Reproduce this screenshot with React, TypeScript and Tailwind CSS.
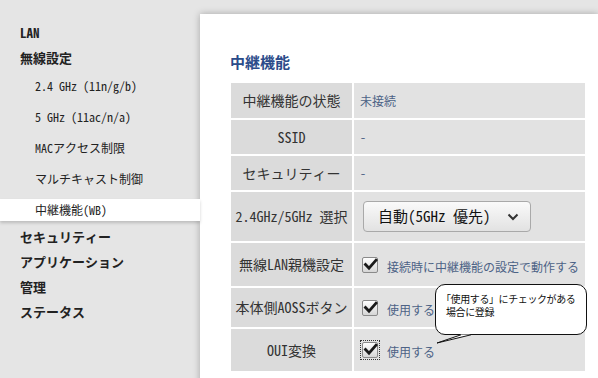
import React from "react";

const FONT = "font-[Noto_Sans_Mono_CJK_JP,Noto_Sans_CJK_JP,monospace]";

function CheckBox({ focus = false }: { focus?: boolean }) {
  return (
    <span className={`relative inline-flex shrink-0 ${focus ? "outline-1 outline-dotted outline-[#333] outline-offset-1" : ""}`}>
      <span className="w-[16px] h-[16px] rounded-[2px] border border-[#8a8a8a] bg-gradient-to-b from-white to-[#d6d6d6] inline-block" />
      <svg className="absolute left-0 top-0" width="17" height="16" viewBox="0 0 17 16">
        <path d="M3.5 7.5 L7 11.2 L14 3.2" fill="none" stroke="#1a1a1a" strokeWidth="2.8" strokeLinecap="square" />
      </svg>
    </span>
  );
}

export default function App() {
  const sub = "h-[22px] leading-[22px] pl-[35px] text-[12px] text-[#222]";
  const top = "h-[25px] leading-[25px] pl-[20px] text-[13px] font-bold text-[#222]";
  return (
    <div className={`relative w-[598px] h-[378px] overflow-hidden bg-[#e5e5e5] flex ${FONT}`}>
      <aside className="w-[200px] shrink-0 pt-[20px] relative z-10">
        <div className={top}>LAN</div>
        <div className={top}>無線設定</div>
        <div className="flex flex-col gap-[9px] mt-[5px]">
          <div className={sub}>2.4 GHz (11n/g/b)</div>
          <div className={sub}>5 GHz (11ac/n/a)</div>
          <div className={sub}>MACアクセス制限</div>
          <div className={sub}>マルチキャスト制御</div>
          <div className={`${sub} bg-white shadow-[0_2px_3px_rgba(0,0,0,0.18)]`}>中継機能(WB)</div>
        </div>
        <div className="mt-[3px]">
          <div className={top}>セキュリティー</div>
          <div className={top}>アプリケーション</div>
          <div className={top}>管理</div>
          <div className={top}>ステータス</div>
        </div>
      </aside>
      <main className="flex-1 mt-[14px] bg-white shadow-[0_0_7px_rgba(0,0,0,0.28)] min-h-[420px] pl-[31px] pt-[38px]">
        <h2 className="text-[15px] leading-[20px] font-bold text-[#2b4c8a] -ml-[1px]">中継機能</h2>
        <div className="mt-[11px] w-[354px] flex flex-col gap-[2px]">
          <Row h="h-[35px]" label="中継機能の状態">
            <span className="pl-[6px] text-[12px] text-[#4d6386]">未接続</span>
          </Row>
          <Row h="h-[34px]" label="SSID">
            <span className="pl-[6px] text-[12px] text-[#4d6386]">-</span>
          </Row>
          <Row h="h-[34px]" label="セキュリティー">
            <span className="pl-[6px] text-[12px] text-[#4d6386]">-</span>
          </Row>
          <Row h="h-[49px]" label="2.4GHz/5GHz 選択">
            <div className="ml-[9px] w-[168px] h-[31px] rounded-[4px] border border-[#a9a9a9] bg-gradient-to-b from-[#fafafa] to-[#e2e2e2] flex items-center pl-[14px] pr-[11px] justify-between">
              <span className="text-[15px] text-[#111]">自動(5GHz 優先)</span>
              <svg width="12" height="8" viewBox="0 0 12 8">
                <polyline points="1.5,1.5 6,6 10.5,1.5" fill="none" stroke="#333" strokeWidth="2" />
              </svg>
            </div>
          </Row>
          <Row h="h-[43px]" label="無線LAN親機設定">
            <div className="pl-[8px] flex items-center gap-[9px]">
              <CheckBox />
              <span className="text-[12px] text-[#4d6386] mt-[4px]">接続時に中継機能の設定で動作する</span>
            </div>
          </Row>
          <Row h="h-[39px]" label="本体側AOSSボタン">
            <div className="pl-[8px] flex items-center gap-[9px]">
              <CheckBox />
              <span className="text-[12px] text-[#4d6386] mt-[4px]">使用する</span>
            </div>
          </Row>
          <Row h="h-[42px]" label="OUI変換">
            <div className="pl-[8px] flex items-center gap-[9px]">
              <CheckBox focus />
              <span className="text-[12px] text-[#4d6386] mt-[4px]">使用する</span>
            </div>
          </Row>
        </div>
      </main>
      <div className="absolute left-[435px] top-[284px] w-[152px] h-[51px] rounded-[10px] border border-[#111] bg-white z-20 pl-[5px] pt-[7px]">
        <p className="text-[10px] leading-[13px] tracking-[-0.4px] text-[#111] whitespace-nowrap">「使用する」にチェックがある</p>
        <p className="text-[10px] leading-[13px] tracking-[-0.4px] text-[#111] pl-[5px]">場合に登録</p>
      </div>
      <svg className="absolute left-[430px] top-[330px] z-30" width="45" height="20" viewBox="0 0 45 20">
        <polygon points="31,4.5 7,13.5 41,4.5" fill="white" stroke="none" />
        <polyline points="31,4.8 7,13 41,4.8" fill="none" stroke="#111" strokeWidth="1" />
      </svg>
    </div>
  );
}

function Row({ h, label, children }: { h: string; label: string; children: React.ReactNode }) {
  return (
    <div className={`flex gap-[2px] ${h}`}>
      <div className="w-[121px] shrink-0 bg-[#dbdbdb] flex items-center justify-center text-[14px] text-[#333] whitespace-nowrap">
        {label}
      </div>
      <div className="flex-1 bg-[#e2e2e2] flex items-center">{children}</div>
    </div>
  );
}
